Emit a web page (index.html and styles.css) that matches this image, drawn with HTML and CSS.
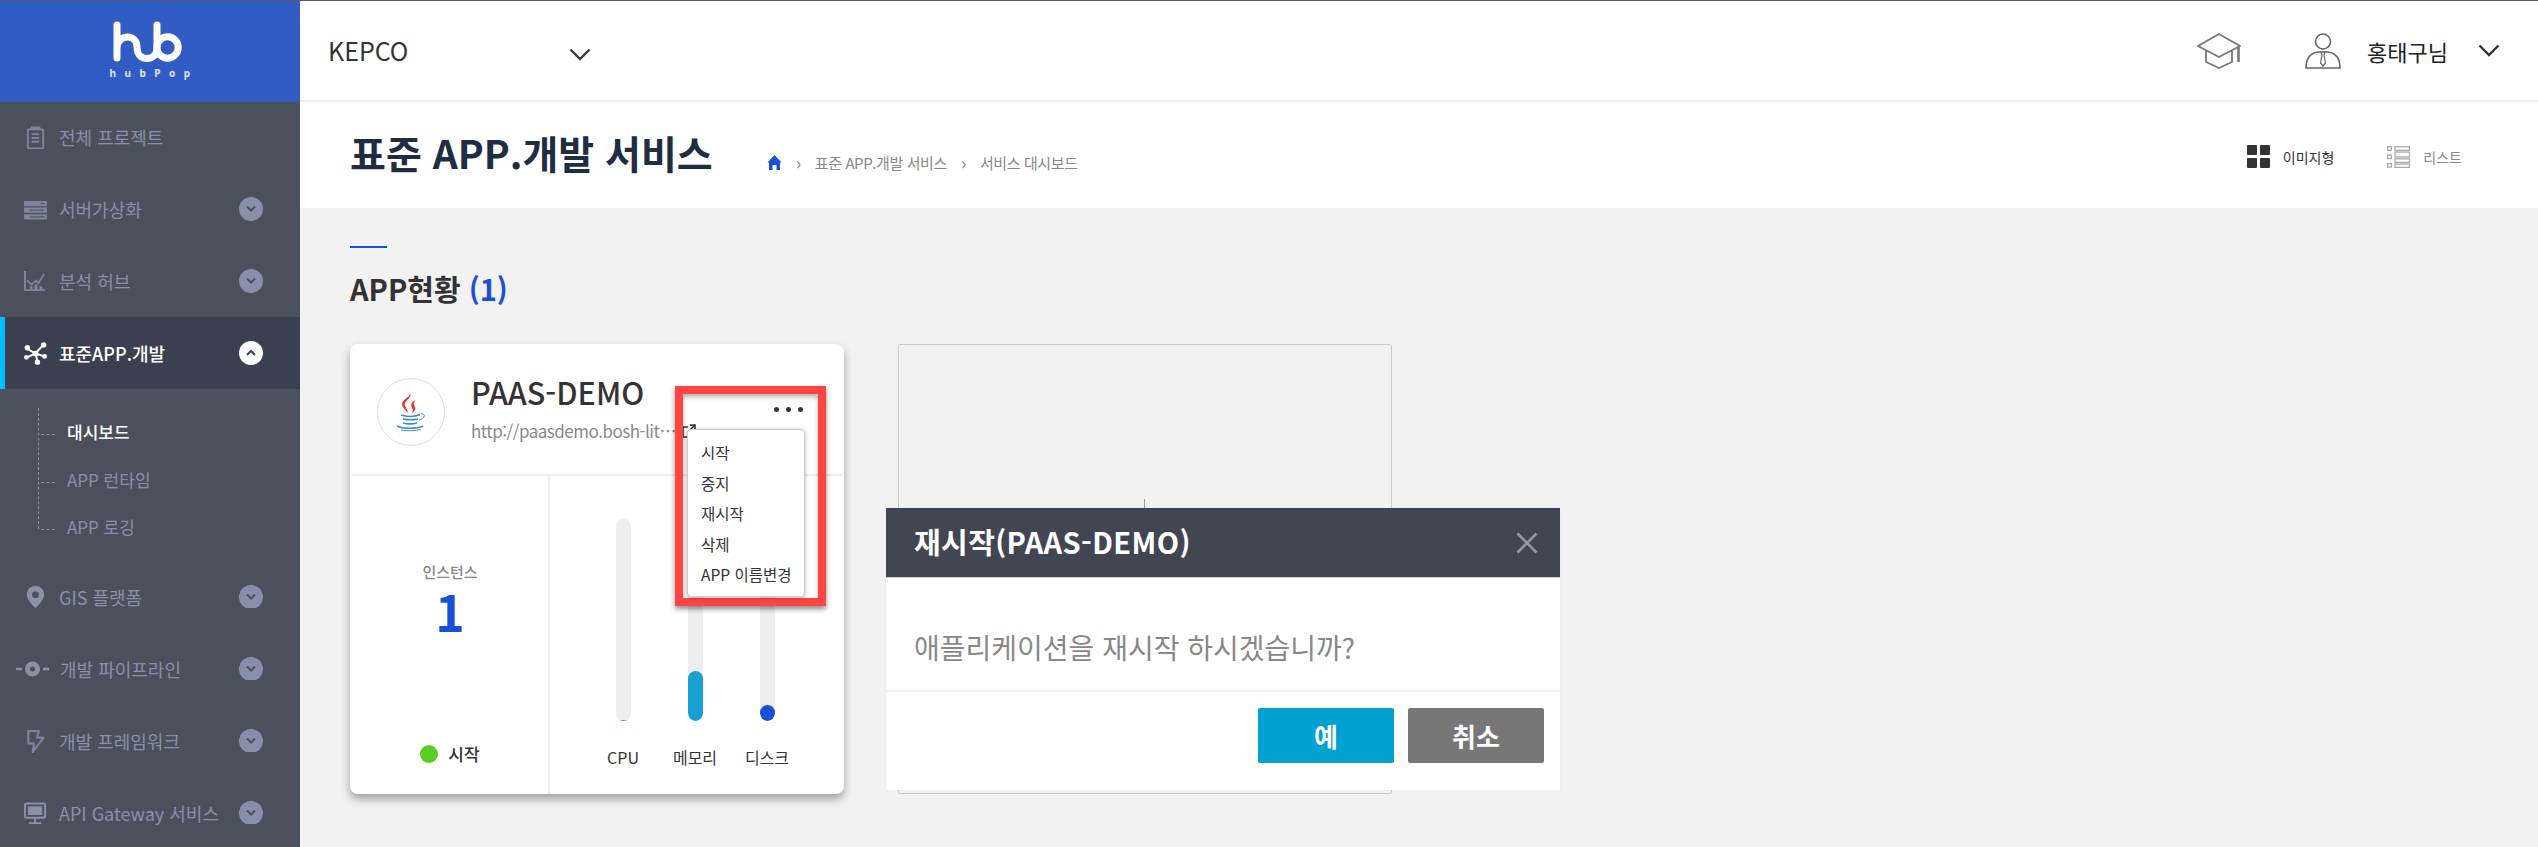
FILE: index.html
```html
<!DOCTYPE html>
<html lang="ko">
<head>
<meta charset="utf-8">
<title>표준 APP.개발 서비스</title>
<link rel="stylesheet" href="styles.css">
</head>
<body>
<div class="app">
  <aside class="side">
    <div class="logo">
      <svg class="logo-mark" width="80" height="46" viewBox="110 18 80 46"><path d="M117 25V58M117 48C117 41 122 37 127.500 37C133 37 137 41 137 47C137 54 141 58.500 147 58.500C153 58.500 157 54 157 47.500M157 25V47.500" fill="none" stroke="#fff" stroke-width="7" stroke-linecap="round"/><circle cx="167.500" cy="47.500" r="10.700" fill="none" stroke="#fff" stroke-width="7"/></svg>
      <div class="logo-text">hubPop</div>
    </div>
    <nav class="nav">
      <a class="nav-item"><svg class="ico" viewBox="0 0 24 24"><path d="M5 3.500h14a1 1 0 0 1 1 1v18a1 1 0 0 1-1 1H5a1 1 0 0 1-1-1v-18a1 1 0 0 1 1-1zM8 3V1.500h8V3M8 8.500h8M8 12.500h8M8 16.500h8" fill="none" stroke="#7d859c" stroke-width="2"/></svg><span class="nav-label">전체 프로젝트</span></a>
      <a class="nav-item"><svg class="ico" viewBox="0 0 24 24"><path d="M0 3h24v5.500H0zM0 10h24v5.500H0zM0 17h24v5.500H0z" fill="#7d859c"/><path d="M17.500 5.700h4M6 12.700h15.500M6 19.700h15.500" stroke="#4b505d"/></svg><span class="nav-label">서버가상화</span><span class="chev"><svg width="12" height="8" viewBox="0 0 12 8"><path d="M2 1.500l4 4 4-4" fill="none" stroke="#4b505d" stroke-width="2"/></svg></span></a>
      <a class="nav-item"><svg class="ico" viewBox="0 0 24 24"><path d="M1 1v20h21" fill="none" stroke="#7d859c" stroke-width="2"/><path d="M3 11l5 4 5-4 2 3 6-10" fill="none" stroke="#7d859c" stroke-width="1.800"/><path d="M6 21v-4h3v4zM11 21v-6h3v6zM16 21v-4h3v4z" fill="#7d859c"/></svg><span class="nav-label">분석 허브</span><span class="chev"><svg width="12" height="8" viewBox="0 0 12 8"><path d="M2 1.500l4 4 4-4" fill="none" stroke="#4b505d" stroke-width="2"/></svg></span></a>
      <a class="nav-item active"><svg class="ico" viewBox="0 0 24 24"><path d="M3 7l9 5M20 3l-8 9M12 12l-9 4M12 12l9 3M12 12l2 8" stroke="#fff" stroke-width="2"/><circle cx="3.500" cy="6" r="2.800" fill="#fff"/><circle cx="20.500" cy="3" r="2.800" fill="#fff"/><circle cx="2.500" cy="16" r="2.500" fill="#fff"/><circle cx="21.500" cy="15" r="2.500" fill="#fff"/><circle cx="14" cy="21" r="2.800" fill="#fff"/><circle cx="12" cy="12" r="3" fill="#fff"/></svg><span class="nav-label">표준APP.개발</span><span class="chev chev-on"><svg width="12" height="8" viewBox="0 0 12 8"><path d="M2 6l4-4 4 4" fill="none" stroke="#3b3f50" stroke-width="2"/></svg></span></a>
      <ul class="sub">
        <li class="sub-item sub-on">대시보드</li>
        <li class="sub-item">APP 런타임</li>
        <li class="sub-item">APP 로깅</li>
      </ul>
      <a class="nav-item"><svg class="ico" viewBox="0 0 24 24"><path d="M12 0C5.500 0 3 5 3 9c0 5 6 11 9 14 3-3 9-9 9-14 0-4-2.500-9-9-9zm0 12.500a3.500 3.500 0 1 1 0-7 3.500 3.500 0 0 1 0 7z" fill="#8a92a8"/></svg><span class="nav-label">GIS 플랫폼</span><span class="chev chev-cut"><svg width="12" height="8" viewBox="0 0 12 8"><path d="M2 1.500l4 4 4-4" fill="none" stroke="#4b505d" stroke-width="2"/></svg></span></a>
      <a class="nav-item"><svg class="ico ico-wide" viewBox="0 0 33 16"><path d="M0 8h6M27 8h6" stroke="#8a92a8" stroke-width="2.600"/><circle cx="16.500" cy="8" r="5" fill="none" stroke="#8a92a8" stroke-width="5"/></svg><span class="nav-label">개발 파이프라인</span><span class="chev chev-cut"><svg width="12" height="8" viewBox="0 0 12 8"><path d="M2 1.500l4 4 4-4" fill="none" stroke="#4b505d" stroke-width="2"/></svg></span></a>
      <a class="nav-item"><svg class="ico" viewBox="0 0 24 24"><path d="M4.500 1h11l-2 7h7L9 23l1.500-9H4.500z" fill="none" stroke="#7d859c" stroke-width="2.200" stroke-linejoin="round"/></svg><span class="nav-label">개발 프레임워크</span><span class="chev chev-cut"><svg width="12" height="8" viewBox="0 0 12 8"><path d="M2 1.500l4 4 4-4" fill="none" stroke="#4b505d" stroke-width="2"/></svg></span></a>
      <a class="nav-item"><svg class="ico" viewBox="0 0 24 24"><rect x="1" y="1.500" width="21" height="15" rx="1.500" fill="none" stroke="#8a92a8" stroke-width="2"/><rect x="4" y="4.500" width="15" height="9" fill="#8a92a8"/><path d="M11.500 17v4M5 22h13" stroke="#8a92a8" stroke-width="2"/></svg><span class="nav-label">API Gateway 서비스</span><span class="chev chev-cut"><svg width="12" height="8" viewBox="0 0 12 8"><path d="M2 1.500l4 4 4-4" fill="none" stroke="#4b505d" stroke-width="2"/></svg></span></a>
    </nav>
  </aside>

  <main class="main">
    <header class="top">
      <div class="org"><span class="org-name">KEPCO</span><svg width="22" height="13" viewBox="0 0 22 13"><path d="M1.500 1.500L11 11l9.500-9.500" fill="none" stroke="#3a3a3a" stroke-width="2.400"/></svg></div>
      <div class="top-right">
        <svg class="cap" width="44" height="36" viewBox="0 0 44 36"><path d="M1 13L22 1l21 12-21 11zM9 18v11l13 6 13-6V18" fill="none" stroke="#777" stroke-width="1.800" stroke-linejoin="round"/><path d="M41.500 14v15" stroke="#777" stroke-width="2.600"/></svg>
        <svg class="user" width="36" height="36" viewBox="0 0 36 36"><circle cx="18" cy="8.500" r="7.500" fill="none" stroke="#666" stroke-width="1.600"/><path d="M1 35c0-10 5-15 12-16h10c7 1 12 6 12 16z" fill="none" stroke="#666" stroke-width="1.600"/><path d="M16 19h4l-1 3 1.500 8L18 33l-2.500-3L17 22z" fill="none" stroke="#666" stroke-width="1.200"/></svg>
        <span class="user-name">홍태구님</span>
        <svg width="22" height="13" viewBox="0 0 22 13"><path d="M1.500 1.500L11 11l9.500-9.500" fill="none" stroke="#333" stroke-width="2.400"/></svg>
      </div>
    </header>

    <section class="head">
      <h1 class="title">표준 APP.개발 서비스</h1>
      <div class="crumbs">
        <svg class="home" width="15" height="15" viewBox="0 0 15 15"><path d="M7.500 0L14.500 7.500H13V15H9.500V10h-4v5H2V7.500H.500z" fill="#1a4fd8"/></svg>
        <span class="crumb-sep">›</span><span class="crumb">표준 APP.개발 서비스</span>
        <span class="crumb-sep">›</span><span class="crumb">서비스 대시보드</span>
      </div>
      <div class="views">
        <span class="view view-on"><svg width="23" height="23" viewBox="0 0 23 23"><path d="M1 0h8a1 1 0 0 1 1 1v8a1 1 0 0 1-1 1H1a1 1 0 0 1-1-1V1a1 1 0 0 1 1-1zM14 0h8a1 1 0 0 1 1 1v8a1 1 0 0 1-1 1h-8a1 1 0 0 1-1-1V1a1 1 0 0 1 1-1zM1 13h8a1 1 0 0 1 1 1v8a1 1 0 0 1-1 1H1a1 1 0 0 1-1-1v-8a1 1 0 0 1 1-1zM14 13h8a1 1 0 0 1 1 1v8a1 1 0 0 1-1 1h-8a1 1 0 0 1-1-1v-8a1 1 0 0 1 1-1z" fill="#333"/></svg>이미지형</span>
        <span class="view"><svg width="23" height="22" viewBox="0 0 23 22"><g fill="none" stroke="#aaa" stroke-width="1.300"><rect x=".7" y=".7" width="3.600" height="3.600"/><rect x=".7" y="9" width="3.600" height="3.600"/><rect x=".7" y="17.500" width="3.600" height="3.600"/><rect x="8" y=".7" width="14.500" height="3.600"/><rect x="8" y="6" width="14.500" height="5"/><rect x="8" y="12.800" width="14.500" height="3.600"/><rect x="8" y="18" width="14.500" height="3.400"/></g></svg>리스트</span>
      </div>
    </section>

    <section class="content">
      <div class="rule"></div>
      <h2 class="sec">APP현황 <em class="count">(1)</em></h2>
      <div class="cards">
        <article class="card">
          <div class="card-top">
            <div class="avatar">
              <svg width="36" height="40" viewBox="0 0 36 40"><path d="M17 1c3 5-7 8-5 13 1 2 3 4 3 7-1-2-6-5-6-9 0-5 8-6 8-11zM23 8c-4 2-6 4-4 8 1 2 1 3 0 5 3-2 4-4 3-6-1-3-2-4 1-7z" fill="#e33b35"/><g fill="none" stroke="#3d8ccb"><path d="M8 23c5 2 14 2 19-.5" stroke-width="1.500"/><path d="M28 22c5-1 4 5-2 6" stroke-width="1"/><path d="M10 27c4 1 10 1 15 0" stroke-width="1.500"/><path d="M10 31c4 1 10 1 14 0" stroke-width="1.500"/><path d="M4 34c6 3 20 3 26 0" stroke-width="1.500"/><path d="M8 38c7 1 14 1 20-.5" stroke-width="1"/></g></svg>
            </div>
            <div class="card-info">
              <div class="card-name">PAAS-DEMO</div>
              <div class="card-url"><span>http://paasdemo.bosh-lit⋯</span><svg class="ext" width="14" height="14" viewBox="0 0 14 14"><path d="M6 3H1v10h10V8M8 1h5v5M13 1L6 8" fill="none" stroke="#333" stroke-width="1.600"/></svg></div>
            </div>
          </div>
          <div class="card-body">
            <div class="inst">
              <div class="inst-label">인스턴스</div>
              <div class="inst-num">1</div>
              <div class="status"><i class="dot"></i>시작</div>
            </div>
            <div class="meters">
              <div class="meter"><div class="track"><div class="fill fill-cpu"></div></div><span class="meter-label">CPU</span></div>
              <div class="meter"><div class="track"><div class="fill fill-mem"></div></div><span class="meter-label">메모리</span></div>
              <div class="meter"><div class="track"><div class="fill fill-disk"></div></div><span class="meter-label">디스크</span></div>
            </div>
          </div>
          <div class="mark">
            <div class="dots"><i></i><i></i><i></i></div>
            <ul class="menu">
              <li>시작</li><li>중지</li><li>재시작</li><li>삭제</li><li>APP 이름변경</li>
            </ul>
          </div>
        </article>
        <div class="ghost"><i class="ghost-tick"></i></div>
      </div>
    </section>
  </main>

  <div class="modal">
    <div class="modal-head"><span class="modal-title">재시작(PAAS-DEMO)</span><svg width="22" height="22" viewBox="0 0 22 22"><path d="M1.500 1.500l19 19M20.500 1.500l-19 19" stroke="#999" stroke-width="2.600"/></svg></div>
    <div class="modal-body">애플리케이션을 재시작 하시겠습니까?</div>
    <div class="modal-foot"><button class="btn btn-ok">예</button><button class="btn btn-no">취소</button></div>
  </div>
</div>
</body>
</html>
```

FILE: styles.css
```css
* { box-sizing: border-box; }
html, body { margin: 0; padding: 0; height: 847px; overflow: hidden; }
body { font-family: "Noto Sans CJK KR", "Noto Sans", sans-serif; color: #333; background: #f2f2f2; }
ul { list-style: none; margin: 0; padding: 0; }
h1, h2 { margin: 0; }

.app { position: relative; display: flex; height: 847px; border-top: 1px solid #555a66; overflow: hidden; }

.side { width: 300px; flex: none; background: #4b505d; height: 846px; overflow: hidden; }
.logo { height: 101px; margin-bottom: -1px; position: relative; z-index: 1; background: #315cc4; display: flex; flex-direction: column; align-items: center; padding-top: 17px; }
.logo-mark { display: block; }
.logo-text { color: #dfe6f7; font-size: 10px; font-weight: 700; letter-spacing: 8.500px; line-height: 12px; margin-top: 3px; margin-left: 8px; font-family: "Noto Sans", sans-serif; }

.nav-item { height: 72px; display: flex; align-items: center; padding-left: 24px; color: #8790a8; font-size: 18px; position: relative; }
.ico { width: 23px; height: 23px; flex: none; }
.ico-wide { width: 33px; height: 16px; margin-left: -8px; }
.nav-item .ico-wide + .nav-label { margin-left: 11px; }
.nav-label { margin-left: 12px; white-space: nowrap; line-height: 24px; }
.chev { position: absolute; left: 239px; top: 24px; width: 24px; height: 24px; border-radius: 50%; background: #8790a8; display: flex; align-items: center; justify-content: center; }
.chev-cut { clip-path: inset(0 0 1px 0); }
.chev-on { background: #fff; }
.active { background: #3b3f50; color: #fff; border-left: 5px solid #00bfff; padding-left: 19px; font-weight: 500; }
.active .chev { left: 234px; }

.sub { height: 172px; padding-top: 19px; margin-left: 38px; position: relative; }
.sub::before { content: ""; position: absolute; left: 0; top: 19px; height: 121px; border-left: 1px dashed #8790a8; }
.sub-item { height: 47.500px; line-height: 47.500px; padding-left: 29px; font-size: 17px; color: #8790a8; position: relative; }
.sub-item::before { content: ""; position: absolute; left: 3px; top: 26px; width: 14px; border-top: 1px dashed #8790a8; }
.sub-on { color: #fff; font-weight: 500; }

.main { flex: 1; min-width: 0; display: flex; flex-direction: column; height: 846px; }
.top { height: 101px; flex: none; background: #fff; border-bottom: 2px solid #eee; display: flex; align-items: center; justify-content: space-between; padding: 0 38px 0 28px; }
.org { display: flex; align-items: center; }
.org-name { font-size: 25px; width: 241px; color: #333; line-height: 36px; margin-top: -2px; }
.org svg { margin-top: 8px; }
.top-right { display: flex; align-items: center; }
.cap { margin-right: 64px; }
.user-name { font-size: 22px; color: #222; margin: 0 30px 0 26px; line-height: 30px; }

.head { height: 106px; flex: none; background: #fff; display: flex; align-items: center; padding: 0 76px 0 50px; }
.title { font-size: 39px; font-weight: 700; color: #1f2d42; line-height: 50px; white-space: nowrap; margin-top: -6px; }
.crumbs { display: flex; align-items: center; margin-left: 54px; margin-top: 14px; font-size: 15px; color: #888; white-space: nowrap; letter-spacing: -.4px; }
.crumb-sep { margin: 0 14px; font-size: 18px; color: #888; }
.views { margin-left: auto; display: flex; align-items: center; gap: 53px; margin-top: 3px; }
.view { display: flex; align-items: center; gap: 13px; font-size: 14px; color: #888; }
.view-on { color: #333; }

.content { flex: 1; padding: 38px 0 0 50px; background: #f2f2f2; }
.rule { width: 37px; height: 2px; background: #1a4fd8; }
.sec { font-size: 29px; font-weight: 700; color: #333; line-height: 40px; margin-top: 20px; white-space: nowrap; }
.count { font-style: normal; font-weight: 700; color: #1a4fd8; }
.cards { display: flex; gap: 54px; margin-top: 36px; align-items: flex-start; }

.card { position: relative; width: 494px; height: 450px; background: #fff; border-radius: 8px; box-shadow: 0 5px 10px rgba(0,0,0,.35); display: flex; flex-direction: column; }
.card-top { height: 132px; flex: none; margin: 0 2px; border-bottom: 2px solid #eee; display: flex; padding: 34px 0 0 25px; }
.avatar { width: 68px; height: 68px; flex: none; border-radius: 50%; border: 1px solid #ddd; display: flex; align-items: center; justify-content: center; }
.card-info { margin-left: 26px; min-width: 0; }
.card-name { font-size: 30.500px; font-weight: 500; color: #333; line-height: 40px; margin-top: -6px; white-space: nowrap; }
.card-url { display: flex; align-items: center; font-size: 17px; color: #888; line-height: 26px; margin-top: 6px; white-space: nowrap; letter-spacing: -.5px; }
.ext { margin-left: 6px; flex: none; }
.card-body { flex: 1; display: flex; min-height: 0; }
.inst { width: 200px; flex: none; border-right: 2px solid #eee; display: flex; flex-direction: column; align-items: center; padding: 84px 0 0 2px; }
.inst-label { font-size: 15px; font-weight: 500; color: #888; line-height: 24px; }
.inst-num { font-size: 50px; font-weight: 700; color: #1a4fd8; line-height: 50px; margin-top: 1px; }
.status { display: flex; align-items: center; gap: 10px; font-size: 17px; font-weight: 500; color: #333; margin-top: 107px; line-height: 24px; }
.dot { width: 18px; height: 18px; border-radius: 50%; background: #5acd24; }
.meters { flex: 1; display: flex; justify-content: center; padding: 43px 4px 0 0; }
.meter { width: 72px; display: flex; flex-direction: column; align-items: center; }
.track { position: relative; width: 15px; height: 202px; border-radius: 8px; background: #eee; overflow: hidden; display: flex; align-items: flex-end; }
.fill { width: 100%; }
.fill-cpu { height: 1px; background: #c84fff; }
.fill-mem { height: 50px; background: #17a0d0; border-radius: 8px; }
.fill-disk { height: 16px; background: #1a4fd8; border-radius: 8px; }
.meter-label { font-size: 16px; color: #333; line-height: 24px; margin-top: 24px; white-space: nowrap; }

.mark { position: absolute; left: 325px; top: 42px; width: 151px; height: 220px; border: 8px solid #ff4444; box-shadow: 0 3px 5px rgba(0,0,0,.45), inset 0 3px 4px rgba(0,0,0,.3); }
.dots { position: absolute; left: 91px; top: 13px; display: flex; gap: 7px; }
.dots i { width: 5px; height: 5px; border-radius: 50%; background: #333; }
.menu { position: absolute; left: 4px; top: 35px; width: 118px; height: 168px; background: #fff; border: 1px solid #ccc; border-radius: 4px; box-shadow: 0 1px 4px rgba(0,0,0,.3); padding: 7px 0 0 13px; }
.menu li { font-size: 15.500px; color: #333; line-height: 30.500px; white-space: nowrap; }

.ghost { position: relative; width: 494px; height: 450px; border: 1px solid #ccc; border-radius: 2px; }
.ghost-tick { position: absolute; left: 245px; top: 154px; height: 12px; border-left: 1px solid #999; }

.modal { position: absolute; left: 886px; top: 507px; width: 674px; height: 282px; background: #fff; box-shadow: 0 0 1px rgba(0,0,0,.1); }
.modal-head { height: 70px; background: #424652; border-bottom: 1px solid #c8c8c8; display: flex; align-items: center; justify-content: space-between; padding: 0 22px 4px 28px; }
.modal-title { font-size: 29px; font-weight: 700; color: #fff; line-height: 36px; white-space: nowrap; letter-spacing: .4px; }
.modal-head svg { margin-top: 4px; }
.modal-body { height: 114px; display: flex; align-items: center; padding: 26px 0 0 28px; font-size: 28px; color: #888; white-space: nowrap; border-bottom: 2px solid #f2f2f2; }
.modal-foot { display: flex; justify-content: flex-end; gap: 14px; padding: 16px 16px 0 0; }
.btn { width: 136px; height: 55px; border: 0; border-radius: 2px; color: #fff; font-family: inherit; font-size: 26px; font-weight: 700; padding: 0; }
.btn-ok { background: #00a2d1; }
.btn-no { background: #777; }
```
